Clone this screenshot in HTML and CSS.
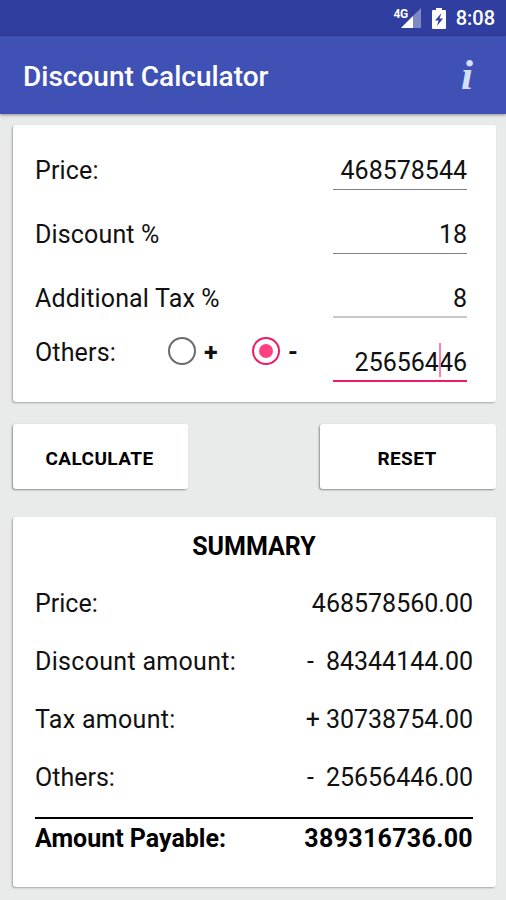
FILE: index.html
```
<!DOCTYPE html>
<html lang="en">
<head>
    <meta charset="UTF-8">
    <meta name="viewport" content="width=device-width, initial-scale=1.0">
    <title>Discount Calculator</title>
    <link rel="stylesheet" href="styles.css">
</head>
<body>
    <div class="status-bar">
        <span class="network">4G</span>
        <svg class="signal" width="20" height="20" viewBox="0 0 20 20">
            <path d="M20 0V20H0z" fill="#7f89c6"/>
            <path d="M12 8V20H0z" fill="#fff"/>
        </svg>
        <svg class="battery" width="14" height="21" viewBox="0 0 14 21">
            <path d="M4 0h6v2h3a1 1 0 0 1 1 1v17a1 1 0 0 1-1 1H1a1 1 0 0 1-1-1V3a1 1 0 0 1 1-1h3z" fill="#fff"/>
            <path d="M9.5 5L3 12.5h3.500L5 18l6-7.500H7.500z" fill="#303f9f"/>
        </svg>
        <span class="clock">8:08</span>
    </div>

    <header class="app-bar">
        <h1>Discount Calculator</h1>
        <span class="info">i</span>
    </header>

    <main>
        <section class="card form">
            <div class="row">
                <label>Price:</label>
                <div class="field">468578544</div>
            </div>
            <div class="row">
                <label>Discount %</label>
                <div class="field">18</div>
            </div>
            <div class="row">
                <label>Additional Tax %</label>
                <div class="field light">8</div>
            </div>
            <div class="row others">
                <label>Others:</label>
                <div class="radio">
                    <span class="circle"></span>
                    <b>+</b>
                </div>
                <div class="radio checked">
                    <span class="circle"></span>
                    <b>-</b>
                </div>
                <div class="field focused">25656446<span class="caret"></span></div>
            </div>
        </section>

        <div class="buttons">
            <button type="button">CALCULATE</button>
            <button type="button" class="reset">RESET</button>
        </div>

        <section class="card summary">
            <h2>SUMMARY</h2>
            <div class="line"><span>Price:</span><span class="amount">468578560.00</span></div>
            <div class="line"><span class="wide">Discount amount:</span><span class="sign">-</span><span>84344144.00</span></div>
            <div class="line"><span class="wide">Tax amount:</span><span class="sign plus">+</span><span>30738754.00</span></div>
            <div class="line"><span>Others:</span><span class="sign">-</span><span>25656446.00</span></div>
            <div class="total"><span>Amount Payable:</span><span class="wide">389316736.00</span></div>
        </section>
    </main>
</body>
</html>
```
FILE: styles.css
```
* {
    box-sizing: border-box;
}

body {
    margin: 0;
    height: 900px;
    overflow: hidden;
    background-color: #e9ebea;
    font-family: Roboto, sans-serif;
    font-size: 25px;
    color: #111;
}

.status-bar {
    display: flex;
    align-items: center;
    height: 36px;
    padding-right: 11px;
    background-color: #303f9f;
    color: #fff;
}

.network {
    margin-left: auto;
    margin-bottom: 9px;
    font-size: 12px;
    font-weight: 700;
    letter-spacing: -0.5px;
}

.signal {
    margin-left: -7px;
}

.battery {
    margin: 0 10px 0 11px;
}

.clock {
    font-size: 20px;
    font-weight: 500;
}

.app-bar {
    position: relative;
    display: flex;
    align-items: center;
    justify-content: space-between;
    height: 78px;
    padding: 3px 33px 0 23px;
    background-color: #3f51b5;
    color: #fff;
    box-shadow: 0 1px 3px rgba(0, 0, 0, 0.4);
}

h1 {
    margin: 0;
    font-size: 28px;
    font-weight: 500;
}

.info {
    margin-bottom: 4px;
    font-family: "Liberation Serif", serif;
    font-size: 43px;
    font-style: italic;
    font-weight: 700;
    line-height: 1;
    color: #d4e0fa;
}

main {
    padding: 11px 10px 0 13px;
}

.card {
    background-color: #fff;
    border-radius: 3px;
    box-shadow: -1px 1px 2px rgba(0, 0, 0, 0.3);
}

.form {
    height: 277px;
    padding: 13px 29px 0 22px;
}

.row {
    display: flex;
    align-items: center;
    justify-content: space-between;
    height: 64px;
}

label {
    letter-spacing: 0.15px;
}

.field {
    position: relative;
    flex-shrink: 0;
    width: 134px;
    height: 40px;
    border-bottom: 1px solid #808080;
    line-height: 42px;
    text-align: right;
}

.light {
    border-bottom: 2px solid #c8c8c8;
}

.focused {
    border-bottom: 2px solid #ec1c6a;
}

.caret {
    position: absolute;
    top: 1px;
    right: 26px;
    width: 2px;
    height: 34px;
    background-color: #ff80ab;
}

.others label {
    width: 133px;
    margin-bottom: 19px;
}

.radio {
    display: flex;
    align-items: center;
    width: 84px;
    margin-bottom: 22px;
}

.checked {
    width: 81px;
}

.radio b {
    margin: 2px 0 0 8px;
    font-size: 25px;
}

.circle {
    display: flex;
    width: 28px;
    height: 28px;
    border: 2px solid #6b6b6b;
    border-radius: 50%;
}

.checked .circle {
    border-color: #ec1c6a;
}

.checked .circle::after {
    content: "";
    width: 14px;
    height: 14px;
    margin: auto;
    border-radius: 50%;
    background-color: #ff4081;
}

.buttons {
    display: flex;
    justify-content: space-between;
    margin: 22px 0 28px;
}

button {
    width: 175px;
    height: 65px;
    padding: 4px 2px 0 0;
    border: none;
    border-radius: 3px;
    background-color: #fff;
    box-shadow: -1px 1px 2px rgba(0, 0, 0, 0.4);
    font-family: Roboto, sans-serif;
    font-size: 19px;
    font-weight: 700;
    letter-spacing: 0.4px;
    color: #000;
}

.reset {
    width: 176px;
}

.summary {
    height: 370px;
    padding: 15px 23px 0 22px;
}

h2 {
    margin: 0 0 12px;
    font-size: 25px;
    font-weight: 700;
    line-height: 30px;
    text-align: center;
    color: #000;
}

.line {
    display: flex;
    align-items: center;
    height: 58px;
}

.amount,
.sign {
    margin-left: auto;
}

.sign {
    margin-right: 12px;
}

.plus {
    margin-right: 6px;
}

.wide {
    letter-spacing: 0.3px;
}

.total {
    display: flex;
    justify-content: space-between;
    margin-top: 11px;
    border-top: 2px solid #000;
    font-weight: 700;
    line-height: 40px;
    color: #000;
}
```
